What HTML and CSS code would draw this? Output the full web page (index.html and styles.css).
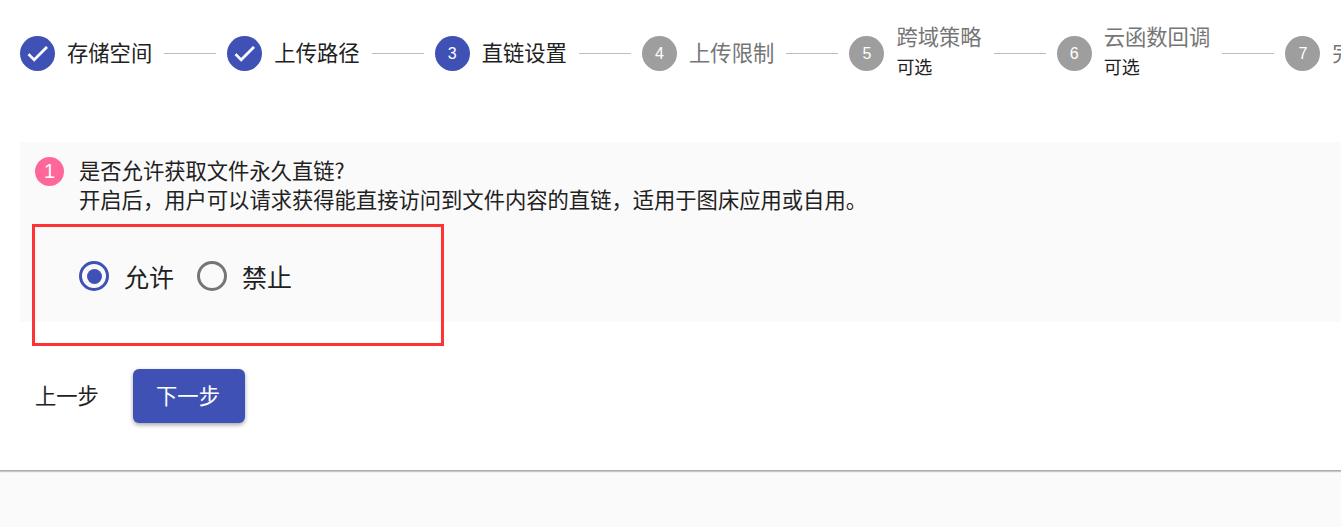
FILE: index.html
```html
<!DOCTYPE html>
<html lang="zh-CN">
<head>
  <meta charset="UTF-8">
  <meta name="viewport" content="width=device-width, initial-scale=1.0">
  <title>直链设置</title>
  <link rel="stylesheet" href="styles.css">
</head>
<body>
  <main class="card">
    <div class="stepper">
      <div class="step done">
        <span class="step-icon"><svg viewBox="0 0 24 24" width="27" height="27"><path d="M9 16.17L4.83 12l-1.42 1.41L9 19 21 7l-1.41-1.41z"/></svg></span>
        <div class="step-label"><div class="step-title">存储空间</div></div>
      </div>
      <div class="step-line"></div>
      <div class="step done">
        <span class="step-icon"><svg viewBox="0 0 24 24" width="27" height="27"><path d="M9 16.17L4.83 12l-1.42 1.41L9 19 21 7l-1.41-1.41z"/></svg></span>
        <div class="step-label"><div class="step-title">上传路径</div></div>
      </div>
      <div class="step-line"></div>
      <div class="step active">
        <span class="step-icon">3</span>
        <div class="step-label"><div class="step-title">直链设置</div></div>
      </div>
      <div class="step-line"></div>
      <div class="step">
        <span class="step-icon">4</span>
        <div class="step-label"><div class="step-title">上传限制</div></div>
      </div>
      <div class="step-line"></div>
      <div class="step">
        <span class="step-icon">5</span>
        <div class="step-label"><div class="step-title">跨域策略</div><div class="step-sub">可选</div></div>
      </div>
      <div class="step-line"></div>
      <div class="step">
        <span class="step-icon">6</span>
        <div class="step-label"><div class="step-title">云函数回调</div><div class="step-sub">可选</div></div>
      </div>
      <div class="step-line"></div>
      <div class="step">
        <span class="step-icon">7</span>
        <div class="step-label"><div class="step-title">完成</div></div>
      </div>
    </div>

    <section class="panel">
      <div class="question">
        <span class="badge">1</span>
        <p class="question-text">是否允许获取文件永久直链?<br>开启后&#65292;用户可以请求获得能直接访问到文件内容的直链&#65292;适用于图床应用或自用。</p>
      </div>
      <div class="radios">
        <label class="radio checked"><span class="radio-dot"></span>允许</label>
        <label class="radio"><span class="radio-dot"></span>禁止</label>
      </div>
      <div class="highlight"></div>
    </section>

    <div class="actions">
      <button class="btn">上一步</button>
      <button class="btn btn-primary">下一步</button>
    </div>
  </main>
</body>
</html>
```

FILE: styles.css
```css
html, body {
  height: 100%;
}
body {
  margin: 0;
  background-color: #fafafa;
  overflow: hidden;
  color: #212121;
  font-family: "Noto Sans CJK SC", "Liberation Sans", sans-serif;
}
.card {
  height: 470px;
  background-color: #fff;
  border-bottom: 1px solid #aaa;
  box-shadow: 0 1px 1px rgba(0, 0, 0, 0.2);
  overflow: hidden;
}
.stepper {
  display: flex;
  align-items: center;
  width: 1400px;
  height: 107px;
  padding-left: 20px;
  box-sizing: border-box;
}
.step {
  display: flex;
  align-items: center;
  flex-shrink: 0;
  gap: 12px;
}
.step-icon {
  display: flex;
  justify-content: center;
  align-items: center;
  width: 35px;
  height: 35px;
  border-radius: 50%;
  background-color: #9e9e9e;
  color: #fff;
  font-family: "Liberation Sans", sans-serif;
  font-size: 16px;
}
.step-icon svg {
  fill: #fff;
  stroke: #fff;
  stroke-width: 0.5;
}
.done .step-icon, .active .step-icon {
  background-color: #3f51b5;
}
.step-label {
  padding-bottom: 4px;
}
.step-title {
  font-size: 21.3px;
  line-height: 29px;
  color: #757575;
}
.done .step-title, .active .step-title {
  color: #212121;
}
.step-sub {
  margin: 4px 0 5px;
  font-size: 18px;
  line-height: 24px;
  color: #212121;
}
.step-line {
  flex-shrink: 0;
  width: 52px;
  margin: 0 11.15px 0 12px;
  border-top: 1px solid #bdbdbd;
}
.panel {
  position: relative;
  margin: 35px 0 0 20px;
  height: 180px;
  background-color: #fafafa;
}
.question {
  display: flex;
  gap: 15px;
  padding: 13px 0 0 15px;
}
.badge {
  display: flex;
  justify-content: center;
  align-items: center;
  flex-shrink: 0;
  width: 29px;
  height: 29px;
  margin-top: 2px;
  border-radius: 50%;
  background-color: #ff6699;
  color: #fff;
  font-family: "Liberation Sans", sans-serif;
  font-size: 20px;
}
.question-text {
  margin: 0;
  font-size: 21.3px;
  line-height: 29px;
  white-space: nowrap;
}
.radios {
  display: flex;
  gap: 23px;
  padding: 48px 0 0 59px;
}
.radio {
  display: flex;
  align-items: center;
  gap: 15px;
  font-size: 25px;
  line-height: 29px;
}
.radio-dot {
  box-sizing: border-box;
  display: flex;
  justify-content: center;
  align-items: center;
  width: 30px;
  height: 30px;
  border: 3px solid #757575;
  border-radius: 50%;
}
.checked .radio-dot {
  border-color: #3f51b5;
}
.checked .radio-dot::after {
  content: "";
  width: 15px;
  height: 15px;
  border-radius: 50%;
  background-color: #3f51b5;
}
.highlight {
  position: absolute;
  top: 82px;
  left: 12px;
  width: 412px;
  height: 122px;
  box-sizing: border-box;
  border: 3px solid #f33;
}
.actions {
  display: flex;
  align-items: center;
  gap: 19.1px;
  margin: 47px 0 0 20px;
}
.btn {
  height: 54px;
  padding: 0 15px 3px;
  border: none;
  border-radius: 6px;
  background: none;
  color: #212121;
  font-family: inherit;
  font-size: 21.3px;
}
.btn-primary {
  width: 112px;
  padding: 0 2px 3px 0;
  background-color: #3f51b5;
  color: #fff;
  box-shadow: 0 2px 4px rgba(0, 0, 0, 0.35);
}
```
